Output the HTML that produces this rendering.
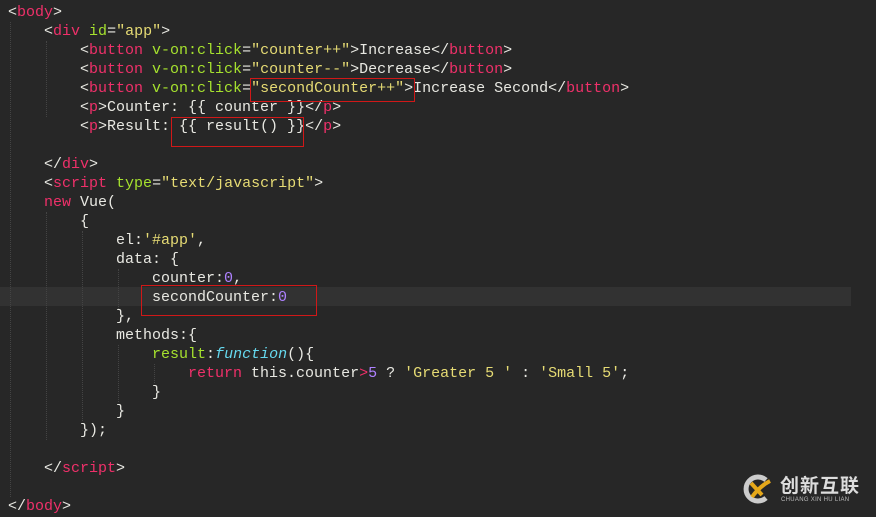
<!DOCTYPE html>
<html><head><meta charset="utf-8"><style>
html,body{margin:0;padding:0}
body{width:876px;height:517px;background:#272727;position:relative;overflow:hidden;font-family:"Liberation Mono",monospace;font-size:15px;color:#e8e8e2}
.l{position:absolute;left:8px;height:19px;line-height:19px;white-space:pre}
.t{color:#f0306a}.a{color:#a6e22e}.s{color:#e6db74}.n{color:#ae81ff}.f{color:#66d9ef;font-style:italic}.g{color:#e8e8e2}
.hl{position:absolute;left:0;top:287px;width:851px;height:19px;background:#323232}
.box{position:absolute;border:1px solid #d01818}
.guide{position:absolute;width:1px;border-left:1px dotted #444}
</style></head><body>
<div class="hl"></div>
<div class="guide" style="left:10px;top:22px;height:475px"></div>
<div class="guide" style="left:46px;top:41px;height:76px"></div>
<div class="guide" style="left:46px;top:212px;height:228px"></div>
<div class="guide" style="left:82px;top:231px;height:190px"></div>
<div class="guide" style="left:118px;top:269px;height:40px"></div>
<div class="guide" style="left:118px;top:345px;height:57px"></div>
<div class="guide" style="left:154px;top:364px;height:19px"></div>
<div class="l" style="top:3px"><span class="g">&lt;</span><span class="t">body</span>&gt;</div>
<div class="l" style="top:22px">    &lt;<span class="t">div</span> <span class="a">id</span>=<span class="s">"app"</span>&gt;</div>
<div class="l" style="top:41px">        &lt;<span class="t">button</span> <span class="a">v-on:click</span>=<span class="s">"counter++"</span>&gt;Increase&lt;/<span class="t">button</span>&gt;</div>
<div class="l" style="top:60px">        &lt;<span class="t">button</span> <span class="a">v-on:click</span>=<span class="s">"counter--"</span>&gt;Decrease&lt;/<span class="t">button</span>&gt;</div>
<div class="l" style="top:79px">        &lt;<span class="t">button</span> <span class="a">v-on:click</span>=<span class="s">"secondCounter++"</span>&gt;Increase Second&lt;/<span class="t">button</span>&gt;</div>
<div class="l" style="top:98px">        &lt;<span class="t">p</span>&gt;Counter: {{ counter }}&lt;/<span class="t">p</span>&gt;</div>
<div class="l" style="top:117px">        &lt;<span class="t">p</span>&gt;Result: {{ result() }}&lt;/<span class="t">p</span>&gt;</div>
<div class="l" style="top:155px">    &lt;/<span class="t">div</span>&gt;</div>
<div class="l" style="top:174px">    &lt;<span class="t">script</span> <span class="a">type</span>=<span class="s">"text/javascript"</span>&gt;</div>
<div class="l" style="top:193px">    <span class="t">new</span> Vue(</div>
<div class="l" style="top:212px">        {</div>
<div class="l" style="top:231px">            el:<span class="s">'#app'</span>,</div>
<div class="l" style="top:250px">            data: {</div>
<div class="l" style="top:269px">                counter:<span class="n">0</span>,</div>
<div class="l" style="top:288px">                secondCounter:<span class="n">0</span></div>
<div class="l" style="top:307px">            },</div>
<div class="l" style="top:326px">            methods:{</div>
<div class="l" style="top:345px">                <span class="a">result</span>:<span class="f">function</span>(){</div>
<div class="l" style="top:364px">                    <span class="t">return</span> this.counter<span class="t">&gt;</span><span class="n">5</span> ? <span class="s">'Greater 5 '</span> : <span class="s">'Small 5'</span>;</div>
<div class="l" style="top:383px">                }</div>
<div class="l" style="top:402px">            }</div>
<div class="l" style="top:421px">        });</div>
<div class="l" style="top:459px">    &lt;/<span class="t">script</span>&gt;</div>
<div class="l" style="top:497px">&lt;/<span class="t">body</span>&gt;</div>
<div class="box" style="left:250px;top:78px;width:163px;height:22px"></div>
<div class="box" style="left:171px;top:117px;width:131px;height:28px"></div>
<div class="box" style="left:141px;top:285px;width:174px;height:29px"></div>
<svg style="position:absolute;left:740px;top:472px" width="34" height="34" viewBox="0 0 34 34">
<path d="M26 8 A12 12 0 1 0 26 26" fill="none" stroke="#ccc" stroke-width="5"/>
<path d="M11 11 L22 23 M30 9 Q20 14 12 25" fill="none" stroke="#e5a81a" stroke-width="4"/>
</svg>
<div style="position:absolute;left:780px;top:474px;font-family:'Noto Sans CJK SC',sans-serif;font-size:19px;font-weight:bold;color:#ddd;line-height:22px;letter-spacing:1px">创新互联</div>
<div style="position:absolute;left:781px;top:497px;font-family:'Liberation Sans',sans-serif;font-size:6px;color:#bbb;letter-spacing:0.3px">CHUANG XIN HU LIAN</div>
</body></html>
